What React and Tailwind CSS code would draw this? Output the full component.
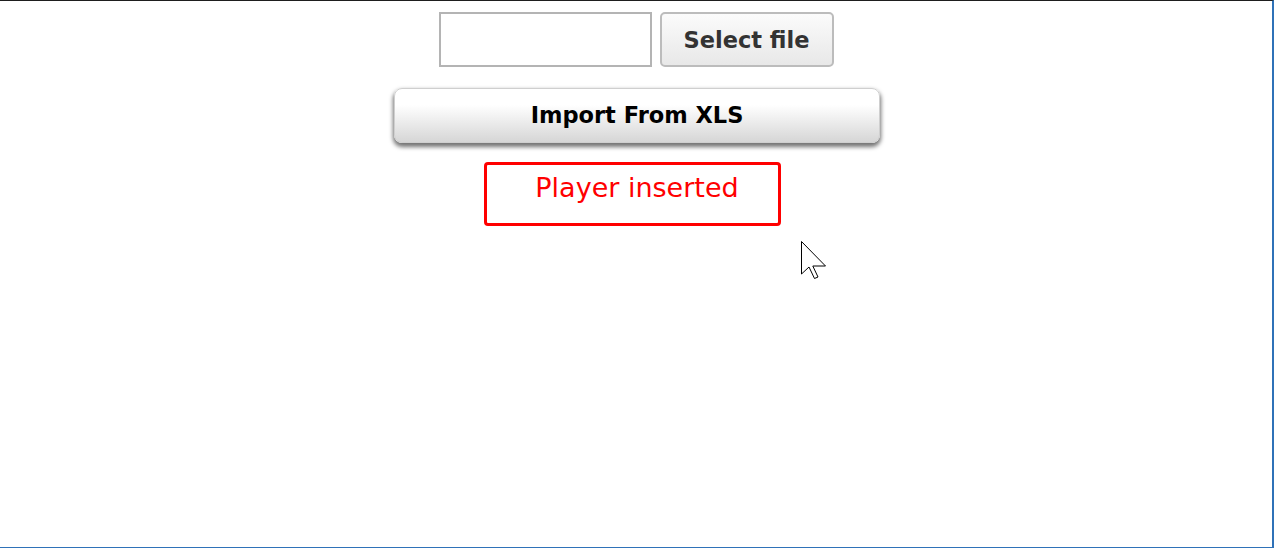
import React from 'react';

// pantalla simple de importacion: elegir archivo, importar y mensaje de resultado
export default function App() {
  return (
    <div
      className="relative w-[1274px] h-[548px] bg-white border-t border-t-[#1e1e1e] border-r-2 border-r-[#2f72b8] border-b border-b-[#2f72b8] flex flex-col items-center pt-[11px]"
      style={{ fontFamily: '"DejaVu Sans", Verdana, sans-serif' }}
    >
      {/* fila del selector de archivo */}
      <div className="flex items-center gap-2">
        <div className="w-[213px] h-[55px] border-2 border-[#b4b4b4] bg-white" />
        <button className="w-[174px] h-[55px] rounded-[5px] border-2 border-[#bcbcbc] bg-linear-to-b from-[#fbfbfb] to-[#e8e8e8] text-[#333] font-bold text-[22.5px] pt-[2px]">
          Select file
        </button>
      </div>

      {/* boton grande de importar */}
      <button className="mt-[21px] ml-[2px] w-[486px] h-[55px] rounded-[8px] border border-[#cfcfcf] bg-linear-to-b from-white from-30% to-[#d6d6d6] shadow-[0_3px_4px_1px_rgba(0,0,0,0.55)] text-black font-bold text-[22.5px]">
        Import From XLS
      </button>

      {/* mensaje de resultado */}
      <div className="mt-[19px] mr-[7px] w-[297px] h-[64px] border-[3px] border-[#ff0000] rounded-[4px] pt-[7px] pl-[9px] text-center text-[#ff0000] text-[27px] leading-[31px]">
        Player inserted
      </div>

      {/* puntero del mouse */}
      <svg
        className="absolute left-[801px] top-[240px]"
        width="26"
        height="40"
        viewBox="0 0 26 40"
      >
        <path
          d="M0.5 0.5 L0.5 33 L8 26 L13.5 37.5 L17 36 L11.8 25 L24.5 25 Z"
          fill="white"
          stroke="black"
          strokeWidth="1"
          strokeLinejoin="miter"
        />
      </svg>
    </div>
  );
}
